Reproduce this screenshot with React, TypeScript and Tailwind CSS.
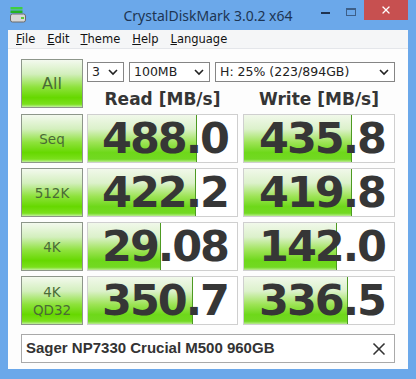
import { X } from 'lucide-react'

const rows = [
  { label: ['Seq'], read: '488.0', readBar: 109, write: '435.8', writeBar: 108 },
  { label: ['512K'], read: '422.2', readBar: 108, write: '419.8', writeBar: 108 },
  { label: ['4K'], read: '29.08', readBar: 73, write: '142.0', writeBar: 93 },
  { label: ['4K', 'QD32'], read: '350.7', readBar: 105, write: '336.5', writeBar: 104 },
]

function GreenButton({ lines, big }: { lines: string[]; big?: boolean }) {
  return (
    <div className="w-[62px] h-[49px] shrink-0 border border-[#8d968a] bg-[linear-gradient(to_bottom,#f3f9ee_0%,#d3efbd_30%,#8ee23c_58%,#66d800_80%,#7be01c_94%,#c2efa0_100%)] flex flex-col items-center justify-center text-[#4a6a36] leading-[18px]">
      {lines.map(l => (
        <span key={l} className={big ? 'text-[16px]' : 'text-[13.5px]'}>{l}</span>
      ))}
    </div>
  )
}

function Cell({ value, bar, width }: { value: string; bar: number; width: number }) {
  return (
    <div className="relative h-[49px] shrink-0 border border-[#cfcfcf] bg-white" style={{ width }}>
      <div
        className="absolute left-0 top-0 bottom-0 border-r border-[#4d9a22] bg-[linear-gradient(to_bottom,#f1f8ea_0%,#dcf1cb_30%,#9ee457_58%,#6ed81a_80%,#72d922_94%,#b9eb90_100%)]"
        style={{ width: bar }}
      />
      <div className="relative h-full flex items-center justify-end pr-[9px] font-bold text-[43px] leading-[43px] tracking-[-2px] text-[#363636]">
        {value}
      </div>
    </div>
  )
}

function Select({ width, text }: { width: number; text: string }) {
  return (
    <div className="h-[20px] border border-[#858585] bg-white flex items-center justify-between pl-[4px] pr-[5px] text-[12.5px] text-[#222]" style={{ width }}>
      <span>{text}</span>
      <svg width="10" height="7" viewBox="0 0 10 7">
        <polyline points="1,1 5,5 9,1" fill="none" stroke="#222" strokeWidth="1.6" />
      </svg>
    </div>
  )
}

export default function App() {
  return (
    <div className="w-[416px] h-[379px] bg-[#6ba8ea] flex flex-col font-['DejaVu_Sans',Tahoma,sans-serif]">
      {/* title bar */}
      <div className="h-[30px] shrink-0 grid grid-cols-[1fr_auto_1fr]">
        <div className="pl-[10px] pt-[7px]">
          <svg width="16" height="16" viewBox="0 0 16 16">
            <rect x="0.5" y="0" width="12" height="2.5" fill="#3fcf3f" />
            <rect x="0.5" y="3.5" width="12" height="2.5" fill="#22b322" />
            <rect x="0.5" y="7" width="15" height="8" rx="2" fill="#d8d8d8" stroke="#6b6b6b" />
            <rect x="11" y="10" width="3" height="2" fill="#5fc83a" />
          </svg>
        </div>
        <div className="pt-[6px] font-['Noto_Sans',sans-serif] text-[14px] text-[#1d3553] leading-[20px]">
          CrystalDiskMark 3.0.2 x64
        </div>
        <div className="flex justify-end pr-[8px]">
          <div className="w-[26px] h-[20px] flex items-end justify-center pb-[6px]">
            <div className="w-[9px] h-[2px] bg-[#1f3350]" />
          </div>
          <div className="w-[26px] h-[20px] flex items-start justify-center pt-[8px]">
            <div className="w-[10px] h-[8px] border border-[#3d5f88] border-t-2" />
          </div>
          <div className="w-[44px] h-[20px] bg-[#c75050] flex items-center justify-center">
            <X className="w-[12px] h-[12px] text-white" strokeWidth={2.5} />
          </div>
        </div>
      </div>

      {/* client area */}
      <div className="mx-[8px] mb-[10px] flex-1 bg-[#fdfdfd] flex flex-col">
        <div className="h-[19px] shrink-0 bg-[#f5f6f7] border-b border-[#e4e6ea] flex items-center pl-[8px] text-[11.5px] text-[#111] leading-[14px]">
          <span className="mr-[12px]"><u>F</u>ile</span>
          <span className="mr-[11px]"><u>E</u>dit</span>
          <span className="mr-[12px]"><u>T</u>heme</span>
          <span className="mr-[12px]"><u>H</u>elp</span>
          <span><u>L</u>anguage</span>
        </div>

        <div className="pl-[13px] pt-[10px] flex flex-col gap-[5px]">
          <div className="flex gap-[4px]">
            <GreenButton lines={['All']} big />
            <div className="flex flex-col">
              <div className="flex gap-[5px] mt-[3px]">
                <Select width={37} text="3" />
                <Select width={81} text="100MB" />
                <Select width={180} text="H: 25% (223/894GB)" />
              </div>
              <div className="flex gap-[5px] mt-[7px] font-bold text-[17px] leading-[20px] text-[#353535]">
                <div className="w-[151px] text-center">Read [MB/s]</div>
                <div className="w-[152px] text-center">Write [MB/s]</div>
              </div>
            </div>
          </div>

          {rows.map(r => (
            <div key={r.read} className="flex">
              <GreenButton lines={r.label} />
              <div className="ml-[4px]">
                <Cell value={r.read} bar={r.readBar} width={151} />
              </div>
              <div className="ml-[5px]">
                <Cell value={r.write} bar={r.writeBar} width={152} />
              </div>
            </div>
          ))}

          <div className="mt-[4px] w-[374px] h-[29px] border border-[#a9a9a9] bg-white flex items-center justify-between pl-[4px] pr-[5px]">
            <span className="font-['Liberation_Sans',Arial,sans-serif] font-bold text-[15px] text-[#333]">
              Sager NP7330 Crucial M500 960GB
            </span>
            <X className="w-[20px] h-[20px] text-[#333]" strokeWidth={2} />
          </div>
        </div>
      </div>
    </div>
  )
}
